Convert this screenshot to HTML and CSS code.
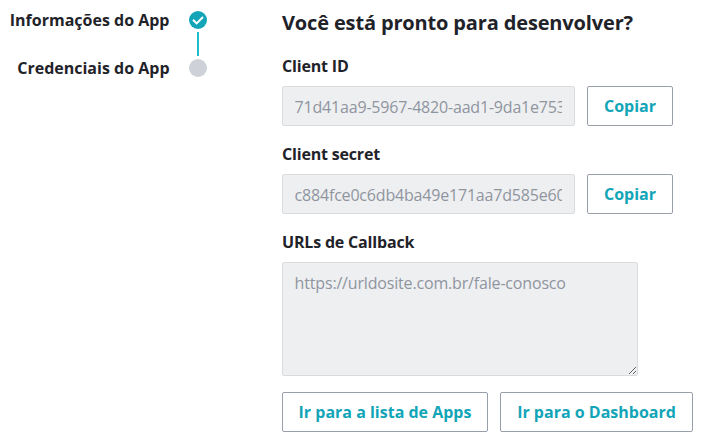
FILE: index.html
```html
<!DOCTYPE html>
<html lang="pt-BR">
<head>
<meta charset="utf-8">
<title>Credenciais do App</title>
<link rel="stylesheet" href="styles.css">
</head>
<body>
<div class="page">
  <ol class="steps">
    <li class="step"><span>Informações do App</span>
      <svg class="dot" viewBox="0 0 18 18"><circle cx="9" cy="9" r="9" fill="#12a5b8"/><path d="M4 8.8 7.6 12.4 14 6" fill="none" stroke="#fff" stroke-width="2"/></svg>
    </li>
    <li class="step"><span>Credenciais do App</span>
      <svg class="dot" viewBox="0 0 18 18"><circle cx="9" cy="9" r="9" fill="#ced1d7"/></svg>
    </li>
  </ol>
  <main class="content">
    <h1>Você está pronto para desenvolver?</h1>
    <label for="cid">Client ID</label>
    <div class="row"><input id="cid" disabled value="71d41aa9-5967-4820-aad1-9da1e753b2c4"><button>Copiar</button></div>
    <label for="secret">Client secret</label>
    <div class="row"><input id="secret" disabled value="c884fce0c6db4ba49e171aa7d585e60b"><button>Copiar</button></div>
    <label for="urls">URLs de Callback</label>
    <textarea id="urls" disabled>https://urldosite.com.br/fale-conosco</textarea>
    <div class="actions"><button class="list">Ir para a lista de Apps</button><button class="dash">Ir para o Dashboard</button></div>
  </main>
</div>
</body>
</html>
```
FILE: styles.css
```css
* { box-sizing: border-box; }
body { margin: 0; background: #fff; color: #1f2329; font: 700 16px/24px "Open Sans", sans-serif; }
.page { display: flex; justify-content: space-between; width: 701px; height: 439px; overflow: hidden; padding-right: 8px; }
.steps { list-style: none; margin: 0; padding: 8px 0 0; width: 207px; }
.step { display: flex; justify-content: flex-end; align-items: center; gap: 19.5px; height: 24px; white-space: nowrap; }
.step + .step { margin-top: 24px; }
.step:first-child { position: relative; }
.step:first-child::after { content: ""; position: absolute; right: 8px; top: 24px; width: 2px; height: 24px; background: #1fbccb; }
.dot { width: 18px; height: 18px; flex: none; }
.content { width: 411px; padding-top: 8px; }
h1 { margin: 0 0 16px; font-size: 20px; line-height: 30px; letter-spacing: -0.15px; }
label { display: block; height: 24px; margin-bottom: 8px; letter-spacing: -0.18px; }
.row { display: flex; gap: 12px; height: 40px; margin-bottom: 16px; }
input, textarea { font: 400 16px/24px "Open Sans", sans-serif; letter-spacing: -0.17px; color: #8f959f; background: #eeeff1; border: 1px solid #d9dbdf; border-radius: 2px; padding: 8px 12px 6px 11.6px; }
input { width: 293px; letter-spacing: -0.19px; }
textarea { display: block; width: 356px; height: 114px; resize: both; }
button { height: 40px; width: 86px; padding: 0; font: 700 16px/24px "Open Sans", sans-serif; color: #12a5b8; background: #fff; border: 1px solid #989fab; border-radius: 2px; }
.actions { display: flex; gap: 12px; margin-top: 16px; }
.list { width: 206px; }
.dash { width: 193px; }
```
